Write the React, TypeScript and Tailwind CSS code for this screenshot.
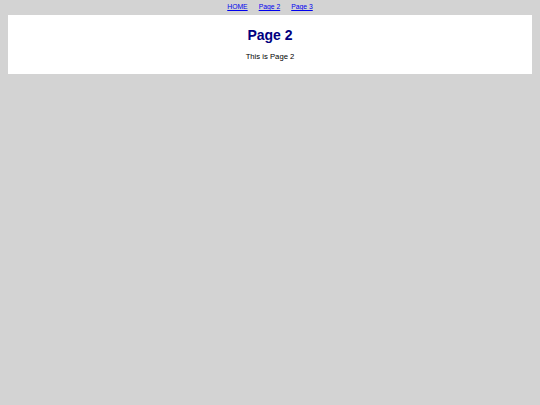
export default function App() {
  return (
    <div className="min-h-[405px] bg-[#d3d3d3] font-['Liberation_Sans',Arial,sans-serif]">
      <nav className="flex h-[15px] items-center justify-center gap-[11px] text-[6.8px] leading-none">
        <a href="#" className="text-[#0000ee] underline">HOME</a>
        <a href="#" className="text-[#0000ee] underline">Page 2</a>
        <a href="#" className="text-[#0000ee] underline">Page 3</a>
      </nav>
      <div className="mx-2 flex h-[59px] flex-col items-center bg-white pt-[11px]">
        <h1 className="text-[14px] font-bold leading-[18px] text-[#000080]">Page 2</h1>
        <p className="mt-[8px] text-[7.7px] leading-[10px] text-black">This is Page 2</p>
      </div>
    </div>
  )
}
